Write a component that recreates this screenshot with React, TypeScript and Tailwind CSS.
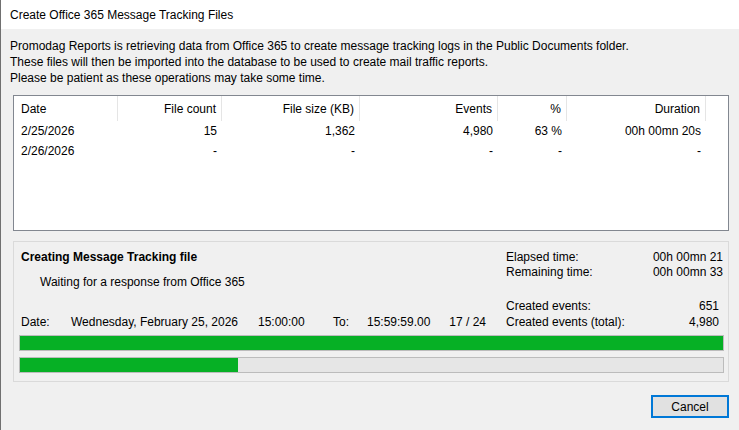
import React from 'react';

const cols = [
  { label: 'Date', w: 'w-[104px]', align: 'text-left pl-[7px]' },
  { label: 'File count', w: 'w-[104px]', align: 'text-right pr-[5px]' },
  { label: 'File size (KB)', w: 'w-[138px]', align: 'text-right pr-[5px]' },
  { label: 'Events', w: 'w-[138px]', align: 'text-right pr-[5px]' },
  { label: '%', w: 'w-[69px]', align: 'text-right pr-[5px]' },
  { label: 'Duration', w: 'w-[139px]', align: 'text-right pr-[5px]' },
];

const rows = [
  ['2/25/2026', '15', '1,362', '4,980', '63 %', '00h 00mn 20s'],
  ['2/26/2026', '-', '-', '-', '-', '-'],
];

const ProgressBar: React.FC<{ pct: number }> = ({ pct }) => (
  <div className="h-[16px] w-[705px] border border-[#bcbcbc] bg-[#e6e6e6]">
    <div className="h-full bg-[#06b025]" style={{ width: `${pct}%` }} />
  </div>
);

export default function App() {
  return (
    <div
      className="relative w-[739px] h-[430px] overflow-hidden bg-[#f0f0f0] border-l border-[#707070] text-[12px] text-black"
      style={{ fontFamily: '"Liberation Sans", Arial, sans-serif' }}
    >
      <div className="h-[29px] bg-white flex items-center pl-[9px]">Create Office 365 Message Tracking Files</div>

      <div className="pt-[9px] pl-[9px] leading-[16px]">
        <div>Promodag Reports is retrieving data from Office 365 to create message tracking logs in the Public Documents folder.</div>
        <div>These files will then be imported into the database to be used to create mail traffic reports.</div>
        <div>Please be patient as these operations may take some time.</div>
      </div>

      <div className="mt-[9px] ml-[12px] w-[716px] h-[136px] border border-[#828790] bg-white">
        <div className="flex h-[25px] items-center">
          {cols.map((c) => (
            <div key={c.label} className={`${c.w} ${c.align} h-full flex items-center ${c.align.includes('right') ? 'justify-end' : ''} border-r border-[#e5e5e5]`}>
              {c.label}
            </div>
          ))}
        </div>
        {rows.map((r, i) => (
          <div key={i} className="flex h-[20px] items-center">
            {r.map((v, j) => (
              <div key={j} className={`${cols[j].w} ${cols[j].align}`}>
                {v}
              </div>
            ))}
          </div>
        ))}
      </div>

      <div className="mt-[10px] ml-[12px] w-[716px] h-[141px] border border-[#dadada] pt-[7px]">
        <div className="flex">
          <div className="w-[492px] pl-[7px]">
            <div className="h-[16px] leading-[16px] font-bold">Creating Message Tracking file</div>
            <div className="mt-[9px] h-[16px] leading-[16px] pl-[19px]">Waiting for a response from Office 365</div>
            <div className="mt-[24px] h-[16px] leading-[16px] flex pr-[20px]">
              <span className="w-[50px]">Date:</span>
              <span className="w-[187px]">Wednesday, February 25, 2026</span>
              <span className="w-[75px]">15:00:00</span>
              <span className="w-[34px]">To:</span>
              <span>15:59:59.00</span>
              <span className="ml-auto">17 / 24</span>
            </div>
          </div>
          <div className="w-[217px] pt-[1px]">
            <div className="h-[15px] leading-[15px] flex justify-between">
              <span>Elapsed time:</span>
              <span>00h 00mn 21</span>
            </div>
            <div className="h-[15px] leading-[15px] flex justify-between">
              <span>Remaining time:</span>
              <span>00h 00mn 33</span>
            </div>
            <div className="mt-[18px] h-[16px] leading-[16px] flex justify-between pr-[4px]">
              <span>Created events:</span>
              <span>651</span>
            </div>
            <div className="h-[16px] leading-[16px] flex justify-between pr-[4px]">
              <span>Created events (total):</span>
              <span>4,980</span>
            </div>
          </div>
        </div>
        <div className="ml-[5px] mt-[5px] flex flex-col gap-[6px]">
          <ProgressBar pct={100} />
          <ProgressBar pct={31} />
        </div>
      </div>

      <div className="flex justify-end mr-[10px] mt-[13px]">
        <button className="w-[78px] h-[23px] border-2 border-[#0078d7] bg-[#e1e1e1] text-[12px] leading-none">Cancel</button>
      </div>
    </div>
  );
}
